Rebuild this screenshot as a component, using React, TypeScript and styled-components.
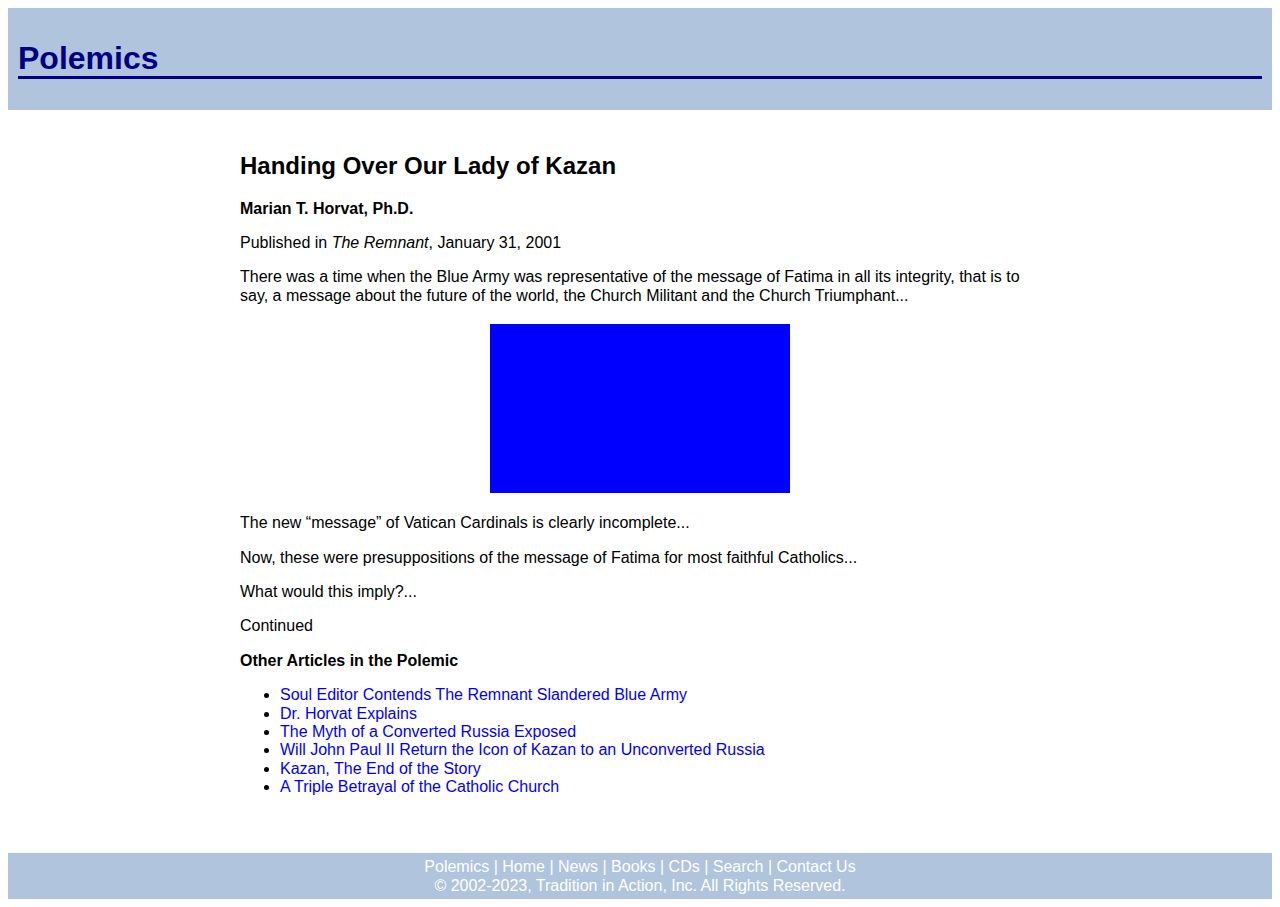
import React from "react";
import styled, { createGlobalStyle } from "styled-components";

const GlobalStyle = createGlobalStyle`
  body {
    margin: 8px;
    background: #ffffff;
    font-family: "Liberation Sans", Arial, Helvetica, sans-serif;
    font-size: 16px;
    line-height: 1.15;
    color: #000000;
  }
`;

const Header = styled.header`
  background: #b0c4de;
  padding: 10px;
`;

const SiteTitle = styled.h1`
  margin: 21px 0 21px;
  padding-top: 1px;
  font-size: 32px;
  font-weight: bold;
  color: #000080;
  border-bottom: 3px solid #000080;
  line-height: 36px;
`;

const Main = styled.main`
  max-width: 800px;
  margin: 0 auto;
  padding: 22px 0 41px;
`;

const Title = styled.h2`
  font-size: 24px;
  font-weight: bold;
  margin: 20px 0;
`;

const Para = styled.p<{ $bold?: boolean }>`
  margin: 16px 0;
  font-weight: ${(p) => (p.$bold ? "bold" : "normal")};
`;

const Figure = styled.div`
  padding: 3px 0 5px;
  display: flex;
  justify-content: center;
`;

const ImageBox = styled.div`
  width: 300px;
  height: 169px;
  background: #0000ff;
`;

const List = styled.ul`
  margin: 16px 0;
  padding-left: 40px;
`;

const Item = styled.li``;

const Link = styled.a<{ $light?: boolean }>`
  color: ${(p) => (p.$light ? "#ffffff" : "#0000ff")};
  text-decoration: none;
`;

const Footer = styled.footer`
  background: #b0c4de;
  color: #ffffff;
  text-align: center;
  padding: 5px 0 4px;
`;

const articles = [
  "Soul Editor Contends The Remnant Slandered Blue Army",
  "Dr. Horvat Explains",
  "The Myth of a Converted Russia Exposed",
  "Will John Paul II Return the Icon of Kazan to an Unconverted Russia",
  "Kazan, The End of the Story",
  "A Triple Betrayal of the Catholic Church",
];

const footerLinks = ["Polemics", "Home", "News", "Books", "CDs", "Search", "Contact Us"];

export default function App() {
  return (
    <>
      <GlobalStyle />
      <Header>
        <SiteTitle>Polemics</SiteTitle>
      </Header>
      <Main>
        <Title>Handing Over Our Lady of Kazan</Title>
        <Para $bold>Marian T. Horvat, Ph.D.</Para>
        <Para>
          Published in <i>The Remnant</i>, January 31, 2001
        </Para>
        <Para>
          There was a time when the Blue Army was representative of the message of Fatima in all
          its integrity, that is to say, a message about the future of the world, the Church
          Militant and the Church Triumphant...
        </Para>
        <Figure>
          <ImageBox />
        </Figure>
        <Para>The new “message” of Vatican Cardinals is clearly incomplete...</Para>
        <Para>Now, these were presuppositions of the message of Fatima for most faithful Catholics...</Para>
        <Para>What would this imply?...</Para>
        <Para>Continued</Para>
        <Para $bold>Other Articles in the Polemic</Para>
        <List>
          {articles.map((a) => (
            <Item key={a}>
              <Link href="#">{a}</Link>
            </Item>
          ))}
        </List>
      </Main>
      <Footer>
        <div>
          {footerLinks.map((l, i) => (
            <React.Fragment key={l}>
              {i > 0 && " | "}
              <Link $light href="#">
                {l}
              </Link>
            </React.Fragment>
          ))}
        </div>
        <div>© 2002-2023, Tradition in Action, Inc. All Rights Reserved.</div>
      </Footer>
    </>
  );
}
